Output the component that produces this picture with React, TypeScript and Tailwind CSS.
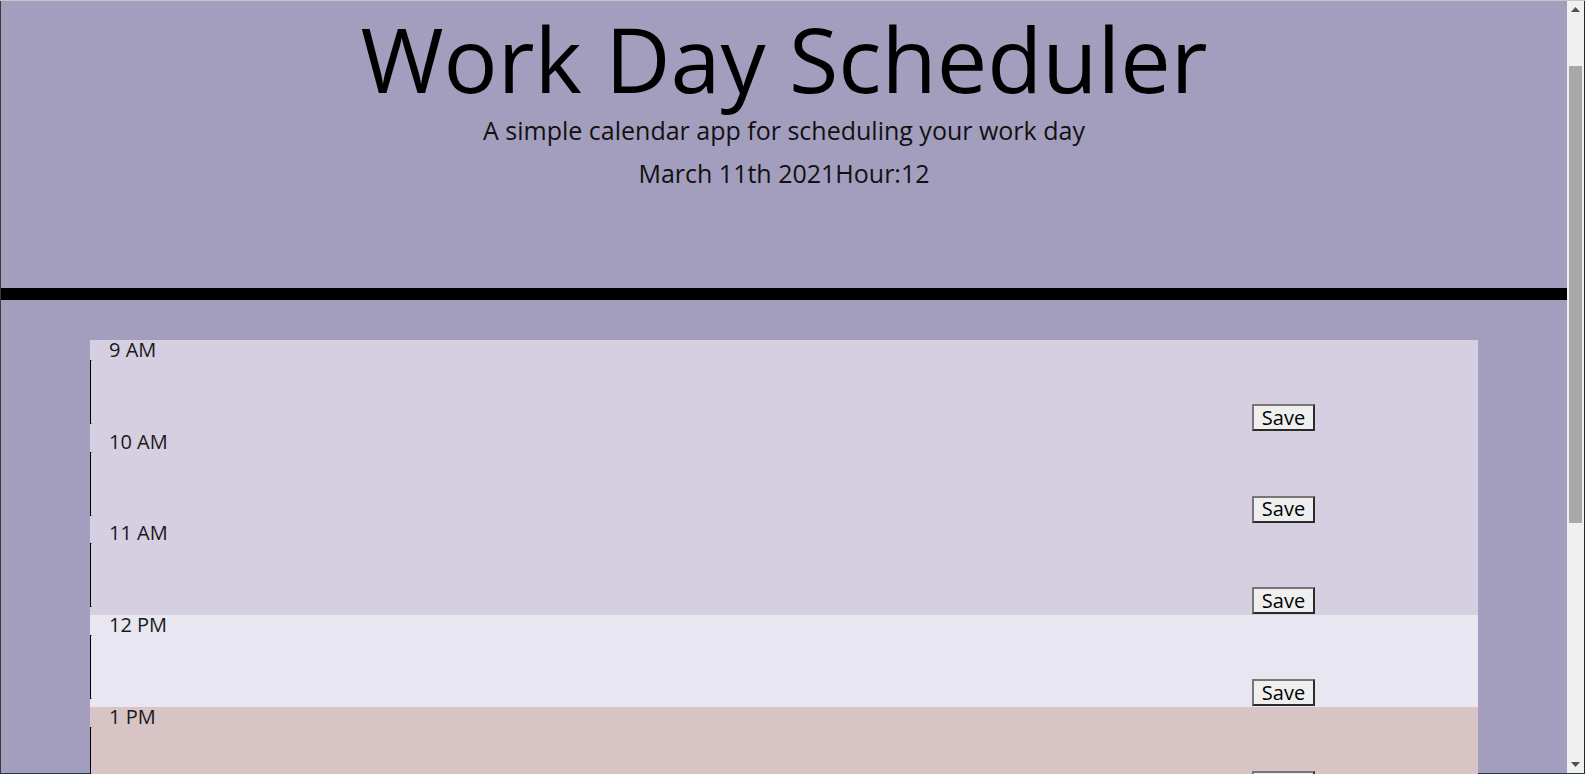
import React from "react";

const rows = [
  { label: "9 AM", bg: "bg-[#d6cfe2]" },
  { label: "10 AM", bg: "bg-[#d6cfe2]" },
  { label: "11 AM", bg: "bg-[#d6cfe2]" },
  { label: "12 PM", bg: "bg-[#e8e6f1]" },
  { label: "1 PM", bg: "bg-[#d8c4c5]" },
];

function Row({ label, bg }: { label: string; bg: string }) {
  return (
    <div className={`relative h-[91.7px] shrink-0 ${bg}`}>
      <div className="pl-[19px] text-[20px] leading-[20px] text-[#1a1a1a]">{label}</div>
      <div className="absolute left-0 top-[20px] h-[64px] w-[2px] border-l border-black">
        <div className="absolute left-0 top-0 h-px w-px bg-[#888]" />
        <div className="absolute left-0 bottom-0 h-px w-px bg-[#888]" />
      </div>
      <button className="absolute left-[1162px] top-[64px] flex h-[27px] w-[63px] items-center justify-center border-2 border-t-[#767676] border-l-[#767676] border-b-[#2b2b2b] border-r-[#2b2b2b] bg-[#efefef] text-[20px] leading-none text-black">
        Save
      </button>
    </div>
  );
}

export default function App() {
  return (
    <div
      className="flex h-[774px] w-[1585px] flex-col overflow-hidden"
      style={{ fontFamily: '"Open Sans", "Noto Sans", sans-serif' }}
    >
      <div className="h-px w-full shrink-0 bg-[#c6c6c6]" />
      <div className="flex min-h-0 flex-1">
        <div className="w-px shrink-0 bg-[#3a3a3a]" />
        <div className="flex min-w-0 flex-1 flex-col bg-[#a49ebe]">
          <header className="flex h-[287px] shrink-0 flex-col items-center">
            <h1 className="mt-[3px] text-[90px] font-normal leading-[108px] text-black">Work Day Scheduler</h1>
            <p className="mt-[1px] text-[25px] leading-[34px] text-[#111]">A simple calendar app for scheduling your work day</p>
            <p className="mt-[9px] text-[25px] leading-[34px] text-[#111]">March 11th 2021Hour:12</p>
          </header>
          <div className="h-[12px] w-full shrink-0 bg-black" />
          <div className="mx-auto mt-[40px] flex w-[1388px] flex-col">
            {rows.map((r) => (
              <Row key={r.label} label={r.label} bg={r.bg} />
            ))}
          </div>
        </div>
        <div className="relative flex w-[17px] shrink-0 flex-col bg-[#f0f0f0]">
          <div className="flex h-[17px] items-center justify-center">
            <svg width="9" height="5" viewBox="0 0 9 5">
              <path d="M0 5 L4.5 0 L9 5 Z" fill="#505050" />
            </svg>
          </div>
          <div className="ml-[2px] mt-[48px] h-[457px] w-[13px] bg-[#a8a8a8]" />
          <div className="flex-1" />
          <div className="flex h-[17px] items-center justify-center">
            <svg width="9" height="5" viewBox="0 0 9 5">
              <path d="M0 0 L4.5 5 L9 0 Z" fill="#505050" />
            </svg>
          </div>
        </div>
        <div className="w-px shrink-0 bg-[#2a2a2a]" />
      </div>
      <div className="h-px w-full shrink-0 bg-[#1f3d4f]" />
    </div>
  );
}
